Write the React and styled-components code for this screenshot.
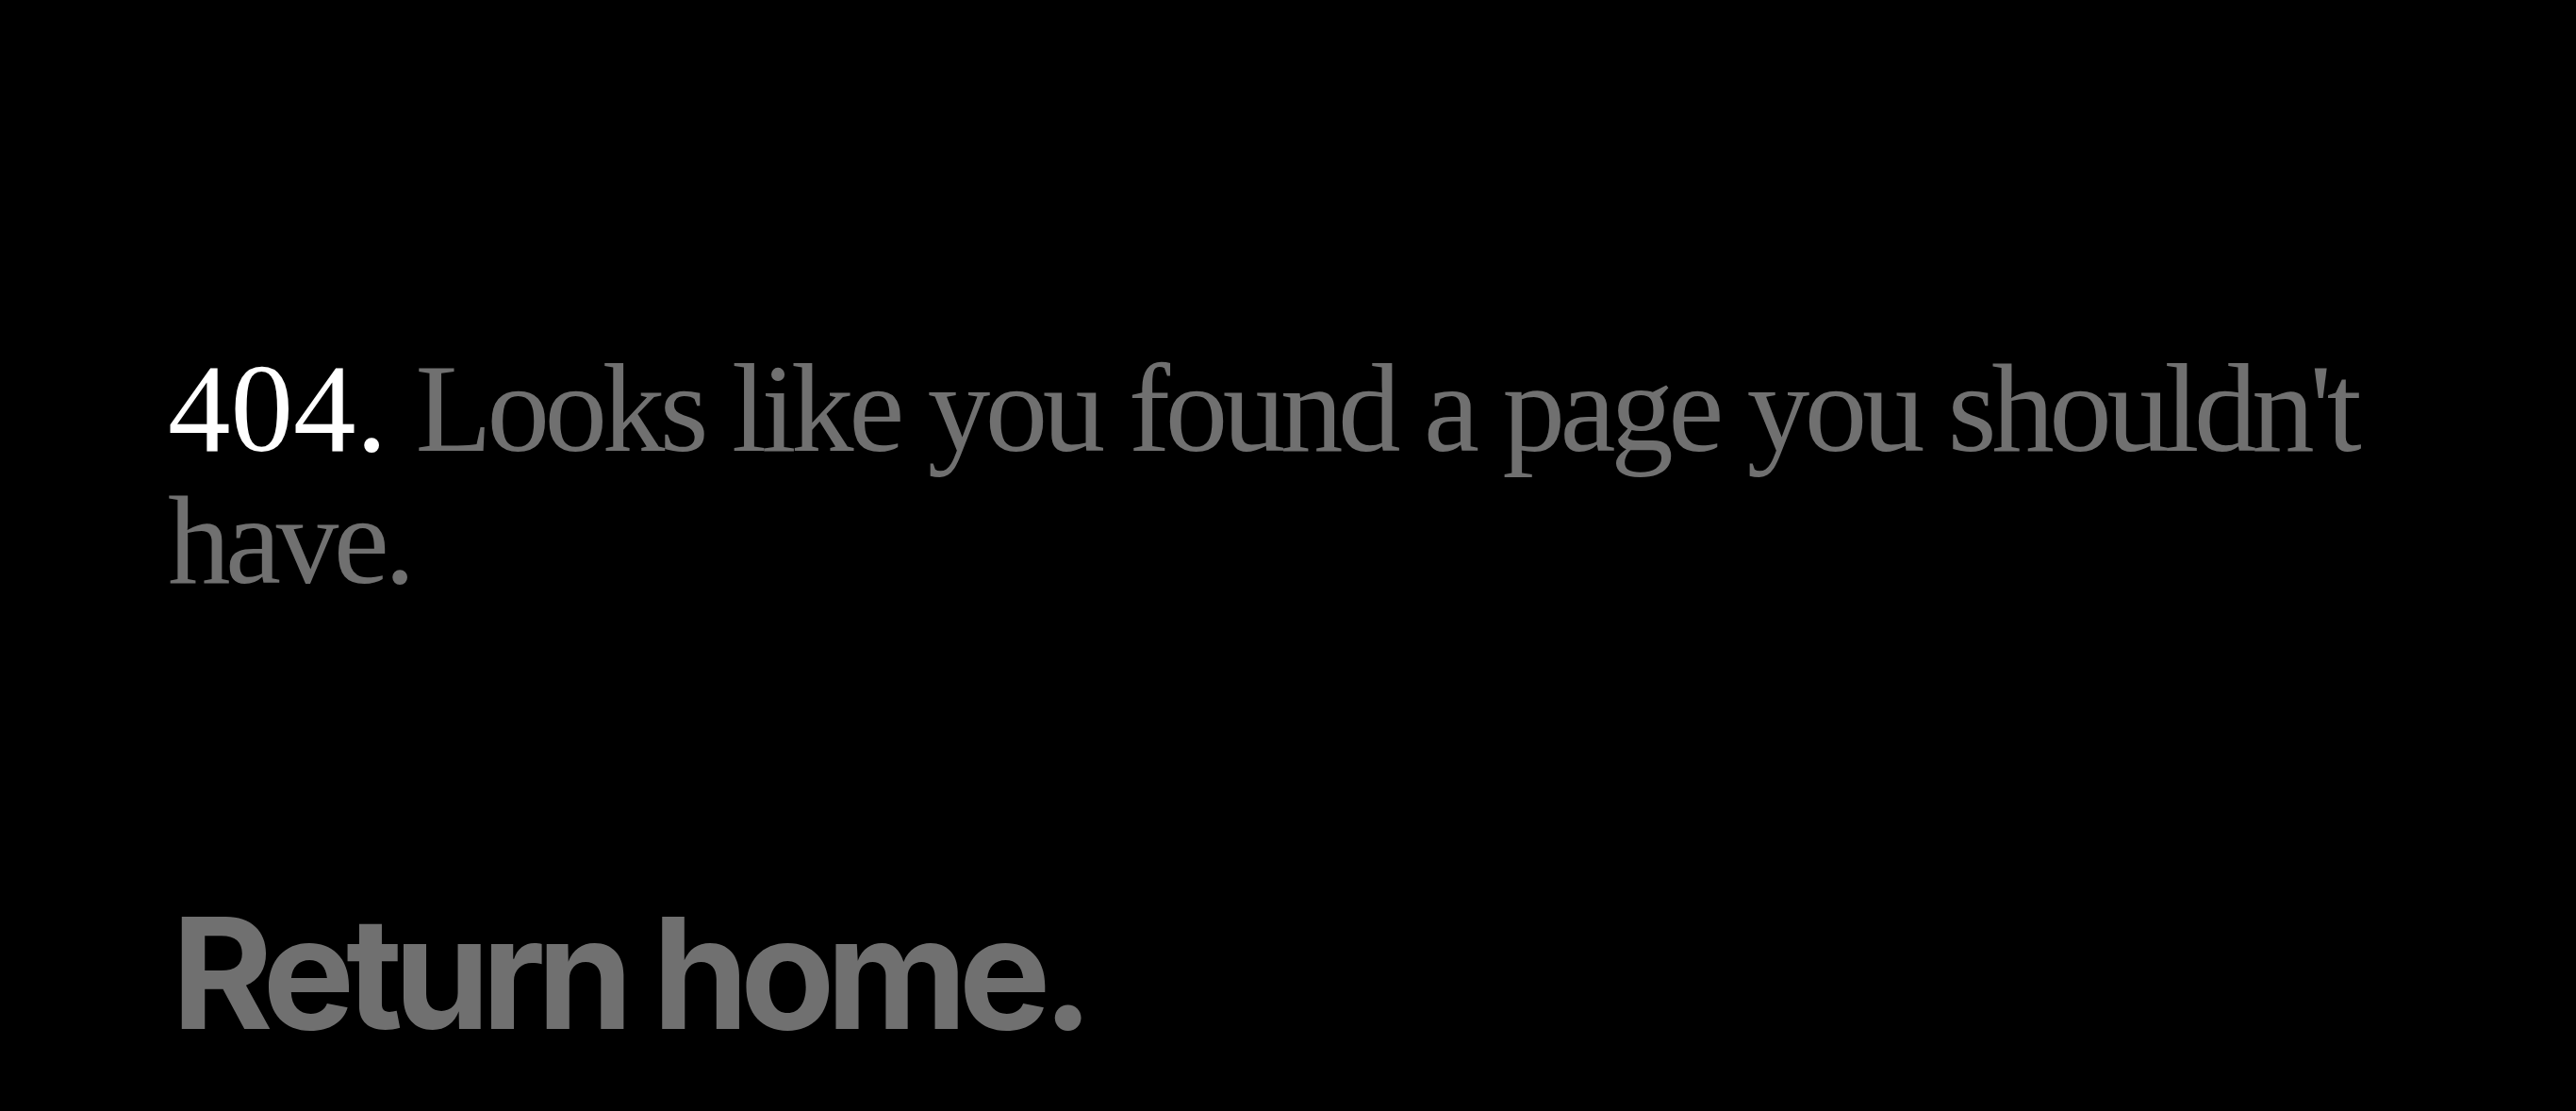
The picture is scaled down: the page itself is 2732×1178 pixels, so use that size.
import styled, { createGlobalStyle } from "styled-components";

const GlobalStyle = createGlobalStyle`
  html, body {
    margin: 0;
    padding: 0;
    background: #000;
  }
`;

// Page layout
const Page = styled.main`
  box-sizing: border-box;
  display: flex;
  flex-direction: column;
  align-items: flex-start;
  min-height: 1178px;
  padding: 363px 170px 0 178px;
  gap: 307px;
  background: #000;
`;

const Message = styled.h1`
  margin: 0;
  font-family: "Liberation Serif", "DejaVu Serif", serif;
  font-weight: 400;
  font-size: 133px;
  line-height: 140px;
  letter-spacing: -5.4px;
  word-spacing: 2px;
  color: #707070;
`;

const Code = styled.span`
  color: #fff;
  letter-spacing: 0;
`;

const HomeLink = styled.a`
  display: block;
  margin-left: 4px;
  font-family: Inter, "Liberation Sans", sans-serif;
  font-weight: 700;
  font-size: 164px;
  line-height: 1;
  letter-spacing: -9.2px;
  color: #707070;
  text-decoration: none;
  cursor: pointer;
`;

const App = () => (
  <>
    <GlobalStyle />
    <Page>
      <Message>
        <Code>404.</Code> Looks like you found a page you shouldn't have.
      </Message>
      <HomeLink href="#">Return home.</HomeLink>
    </Page>
  </>
);

export default App;
